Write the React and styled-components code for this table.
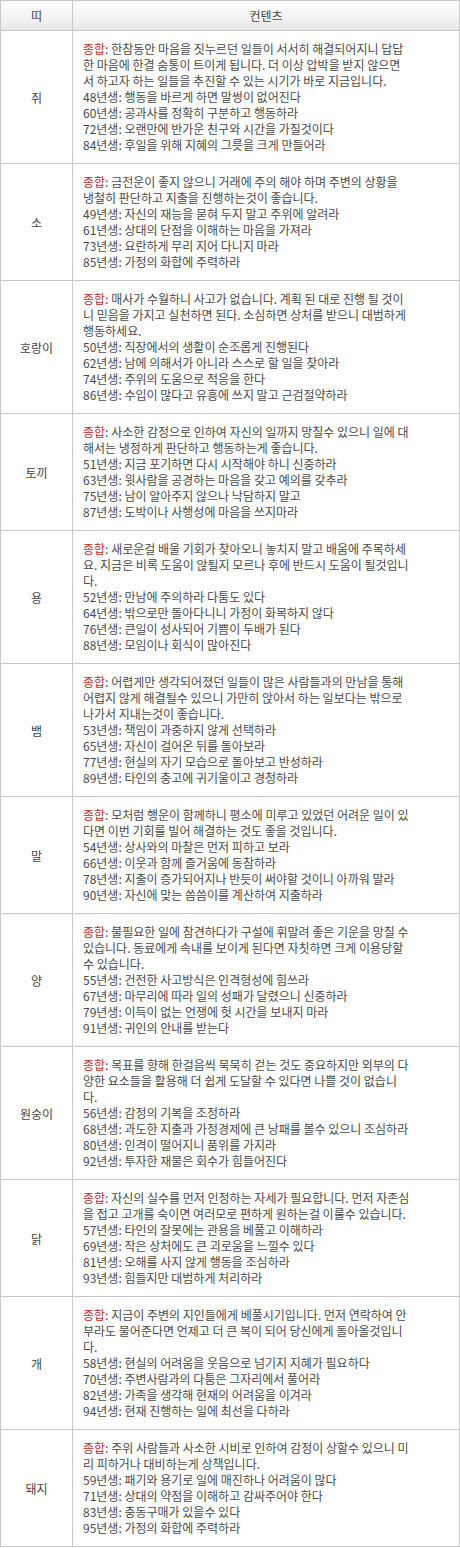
import React from 'react';
import styled, { createGlobalStyle } from 'styled-components';

const GlobalStyle = createGlobalStyle`
  html, body {
    margin: 0;
    padding: 0;
    background: #ffffff;
  }
  body {
    font-family: "Noto Sans CJK KR", "Noto Sans", sans-serif;
    font-size: 12px;
    color: #4a4a4a;
  }
`;

const Table = styled.table`
  width: 460px;
  border-collapse: collapse;
  table-layout: fixed;
  background-color: #ffffff;
`;

const HeadRow = styled.tr`
  background: linear-gradient(to bottom, #ffffff 0%, #f4f4f4 50%, #e6e6e6 100%);
`;

const HeadCell = styled.th`
  width: ${props => props.width || 'auto'};
  height: 29px;
  padding: 0;
  border: 1px solid #c9c9c9;
  font-weight: normal;
  text-align: center;
  color: #444;
  line-height: 29px;
`;

const Row = styled.tr``;

const LabelCell = styled.td`
  padding: 0;
  border: 1px solid #c9c9c9;
  text-align: center;
  vertical-align: middle;
  color: #444;
`;

const ContentCell = styled.td`
  padding: 10px 10px;
  border: 1px solid #c9c9c9;
  vertical-align: top;
  line-height: 16px;
`;

const Line = styled.div`
  white-space: nowrap;
`;

const Summary = styled.span`
  color: #c22a2a;
`;

const data = [
  {
    tti: '쥐',
    summary: [
      '한참동안 마음을 짓누르던 일들이 서서히 해결되어지니 답답',
      '한 마음에 한결 숨통이 트이게 됩니다. 더 이상 압박을 받지 않으면',
      '서 하고자 하는 일들을 추진할 수 있는 시기가 바로 지금입니다.',
    ],
    years: [
      '48년생: 행동을 바르게 하면 말썽이 없어진다',
      '60년생: 공과사를 정확히 구분하고 행동하라',
      '72년생: 오랜만에 반가운 친구와 시간을 가질것이다',
      '84년생: 후일을 위해 지혜의 그릇을 크게 만들어라',
    ],
  },
  {
    tti: '소',
    summary: [
      '금전운이 좋지 않으니 거래에 주의 해야 하며 주변의 상황을',
      '냉철히 판단하고 지출을 진행하는것이 좋습니다.',
    ],
    years: [
      '49년생: 자신의 재능을 묻혀 두지 말고 주위에 알려라',
      '61년생: 상대의 단점을 이해하는 마음을 가져라',
      '73년생: 요란하게 무리 지어 다니지 마라',
      '85년생: 가정의 화합에 주력하라',
    ],
  },
  {
    tti: '호랑이',
    summary: [
      '매사가 수월하니 사고가 없습니다. 계획 된 대로 진행 될 것이',
      '니 믿음을 가지고 실천하면 된다. 소심하면 상처를 받으니 대범하게',
      '행동하세요.',
    ],
    years: [
      '50년생: 직장에서의 생활이 순조롭게 진행된다',
      '62년생: 남에 의해서가 아니라 스스로 할 일을 찾아라',
      '74년생: 주위의 도움으로 적응을 한다',
      '86년생: 수입이 많다고 유흥에 쓰지 말고 근검절약하라',
    ],
  },
  {
    tti: '토끼',
    summary: [
      '사소한 감정으로 인하여 자신의 일까지 망칠수 있으니 일에 대',
      '해서는 냉정하게 판단하고 행동하는게 좋습니다.',
    ],
    years: [
      '51년생: 지금 포기하면 다시 시작해야 하니 신중하라',
      '63년생: 윗사람을 공경하는 마음을 갖고 예의를 갖추라',
      '75년생: 남이 알아주지 않으나 낙담하지 말고',
      '87년생: 도박이나 사행성에 마음을 쓰지마라',
    ],
  },
  {
    tti: '용',
    summary: [
      '새로운걸 배울 기회가 찾아오니 놓치지 말고 배움에 주목하세',
      '요. 지금은 비록 도움이 않될지 모르나 후에 반드시 도움이 될것입니',
      '다.',
    ],
    years: [
      '52년생: 만남에 주의하라 다툼도 있다',
      '64년생: 밖으로만 돌아다니니 가정이 화목하지 않다',
      '76년생: 큰일이 성사되어 기쁨이 두배가 된다',
      '88년생: 모임이나 회식이 많아진다',
    ],
  },
  {
    tti: '뱀',
    summary: [
      '어렵게만 생각되어졌던 일들이 많은 사람들과의 만남을 통해',
      '어렵지 않게 해결될수 있으니 가만히 앉아서 하는 일보다는 밖으로',
      '나가서 지내는것이 좋습니다.',
    ],
    years: [
      '53년생: 책임이 과중하지 않게 선택하라',
      '65년생: 자신이 걸어온 뒤를 돌아보라',
      '77년생: 현실의 자기 모습으로 돌아보고 반성하라',
      '89년생: 타인의 충고에 귀기울이고 경청하라',
    ],
  },
  {
    tti: '말',
    summary: [
      '모처럼 행운이 함께하니 평소에 미루고 있었던 어려운 일이 있',
      '다면 이번 기회를 빌어 해결하는 것도 좋을 것입니다.',
    ],
    years: [
      '54년생: 상사와의 마찰은 먼저 피하고 보라',
      '66년생: 이웃과 함께 즐거움에 동참하라',
      '78년생: 지출이 증가되어지나 반듯이 써야할 것이니 아까워 말라',
      '90년생: 자신에 맞는 씀씀이를 계산하여 지출하라',
    ],
  },
  {
    tti: '양',
    summary: [
      '불필요한 일에 참견하다가 구설에 휘말려 좋은 기운을 망칠 수',
      '있습니다. 동료에게 속내를 보이게 된다면 자칫하면 크게 이용당할',
      '수 있습니다.',
    ],
    years: [
      '55년생: 건전한 사고방식은 인격형성에 힘쓰라',
      '67년생: 마무리에 따라 일의 성패가 달렸으니 신중하라',
      '79년생: 이득이 없는 언쟁에 헛 시간을 보내지 마라',
      '91년생: 귀인의 안내를 받는다',
    ],
  },
  {
    tti: '원숭이',
    summary: [
      '목표를 향해 한걸음씩 묵묵히 걷는 것도 중요하지만 외부의 다',
      '양한 요소들을 활용해 더 쉽게 도달할 수 있다면 나쁠 것이 없습니',
      '다.',
    ],
    years: [
      '56년생: 감정의 기복을 조정하라',
      '68년생: 과도한 지출과 가정경제에 큰 낭패를 볼수 있으니 조심하라',
      '80년생: 인격이 떨어지니 품위를 가지라',
      '92년생: 투자한 재물은 회수가 힘들어진다',
    ],
  },
  {
    tti: '닭',
    summary: [
      '자신의 실수를 먼저 인정하는 자세가 필요합니다. 먼저 자존심',
      '을 접고 고개를 숙이면 여러모로 편하게 원하는걸 이룰수 있습니다.',
    ],
    years: [
      '57년생: 타인의 잘못에는 관용을 베풀고 이해하라',
      '69년생: 작은 상처에도 큰 괴로움을 느낄수 있다',
      '81년생: 오해를 사지 않게 행동을 조심하라',
      '93년생: 힘들지만 대범하게 처리하라',
    ],
  },
  {
    tti: '개',
    summary: [
      '지금이 주변의 지인들에게 베풀시기입니다. 먼저 연락하여 안',
      '부라도 물어준다면 언제고 더 큰 복이 되어 당신에게 돌아올것입니',
      '다.',
    ],
    years: [
      '58년생: 현실의 어려움을 웃음으로 넘기지 지혜가 필요하다',
      '70년생: 주변사람과의 다툼은 그자리에서 풀어라',
      '82년생: 가족을 생각해 현재의 어려움을 이겨라',
      '94년생: 현재 진행하는 일에 최선을 다하라',
    ],
  },
  {
    tti: '돼지',
    summary: [
      '주위 사람들과 사소한 시비로 인하여 감정이 상할수 있으니 미',
      '리 피하거나 대비하는게 상책입니다.',
    ],
    years: [
      '59년생: 패기와 용기로 일에 매진하나 어려움이 많다',
      '71년생: 상대의 약점을 이해하고 감싸주어야 한다',
      '83년생: 충동구매가 있을수 있다',
      '95년생: 가정의 화합에 주력하라',
    ],
  },
];

const App = () => {
  return (
    <>
      <GlobalStyle />
      <Table>
        <thead>
          <HeadRow>
            <HeadCell width="71px">띠</HeadCell>
            <HeadCell>컨텐츠</HeadCell>
          </HeadRow>
        </thead>
        <tbody>
          {data.map(item => (
            <Row key={item.tti}>
              <LabelCell>{item.tti}</LabelCell>
              <ContentCell>
                {item.summary.map((text, i) => (
                  <Line key={`s-${i}`}>
                    {i === 0 && <><Summary>종합</Summary>: </>}
                    {text}
                  </Line>
                ))}
                {item.years.map(text => (
                  <Line key={text}>{text}</Line>
                ))}
              </ContentCell>
            </Row>
          ))}
        </tbody>
      </Table>
    </>
  );
};

export default App;
